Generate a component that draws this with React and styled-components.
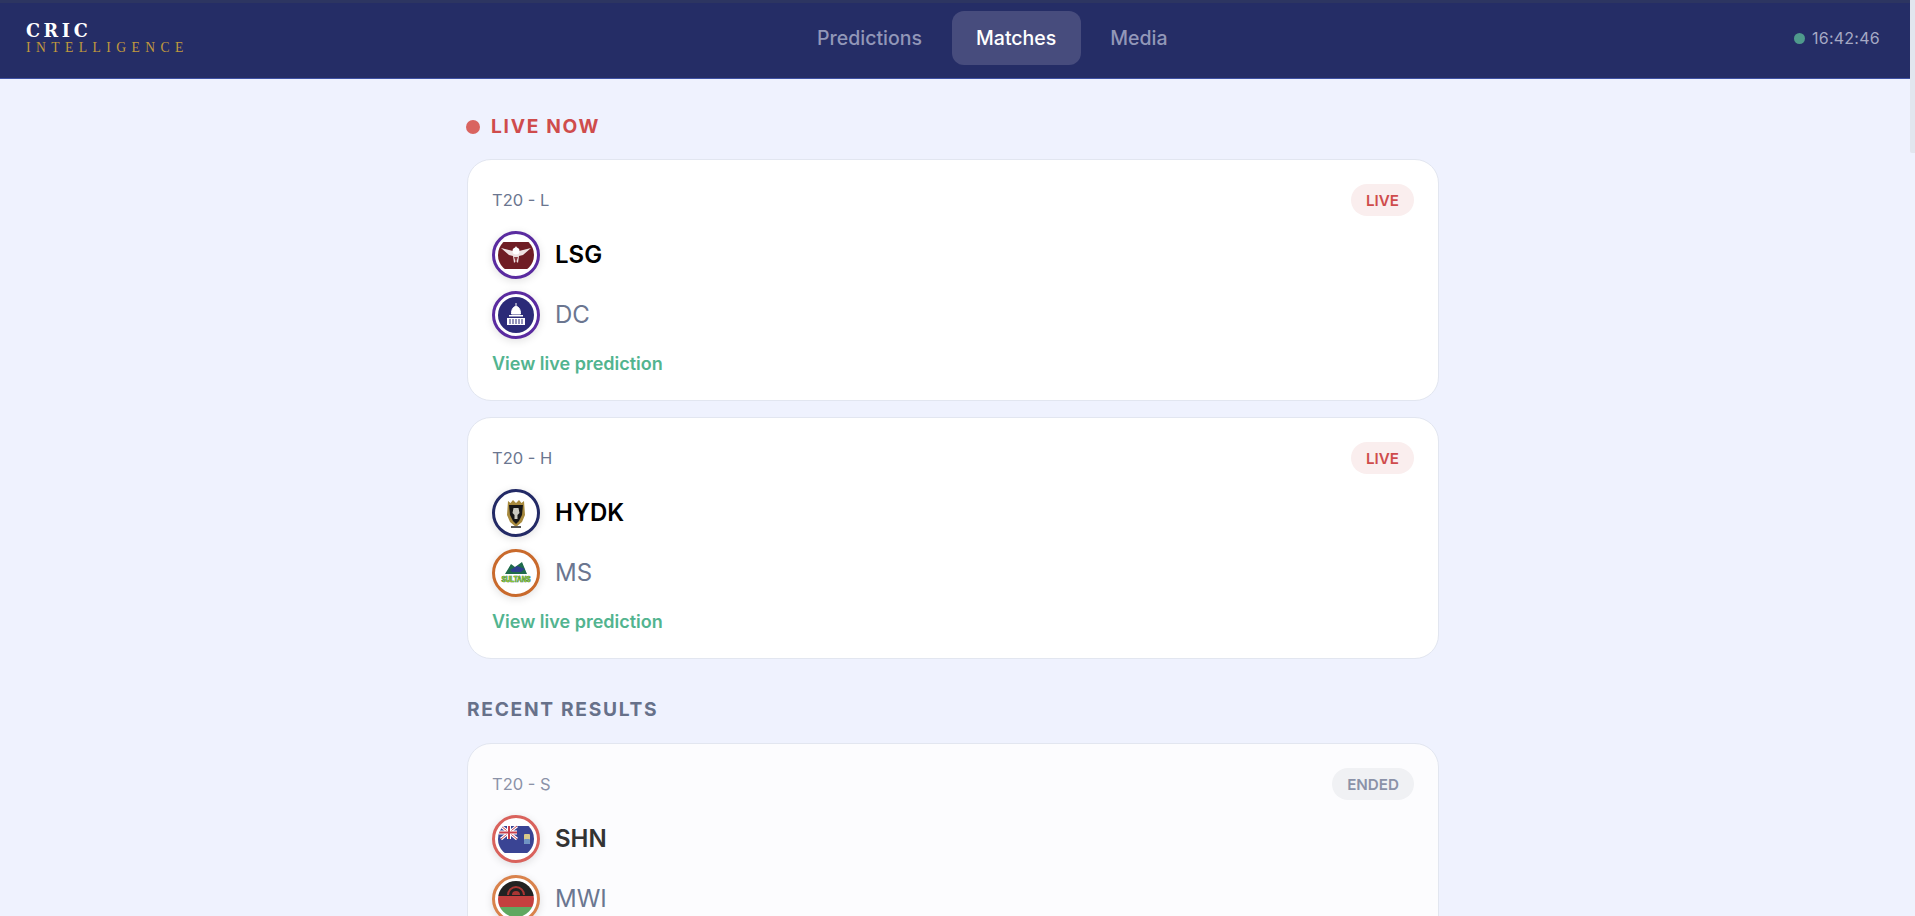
import React from "react";
import styled, { createGlobalStyle } from "styled-components";

const GlobalStyle = createGlobalStyle`
  html, body {
    margin: 0;
    padding: 0;
    height: 100%;
    overflow: hidden;
    background: #eff2fe;
    font-family: Inter, "Noto Sans", sans-serif;
  }
  * {
    box-sizing: border-box;
  }
`;

const Page = styled.div`
  height: 916px;
  overflow: hidden;
  display: flex;
`;

const Content = styled.div`
  flex: 1;
  min-width: 0;
`;

const ScrollTrack = styled.div`
  width: 5px;
`;

const ScrollThumb = styled.div`
  height: 153px;
  border-radius: 0 0 0 2px;
  background: #e2e6ee;
`;

const Header = styled.header`
  height: 79px;
  background: #252d66;
  box-shadow: inset 0 3px 0 #2d3561;
  border-bottom: 1px solid #3f51a3;
  display: flex;
  align-items: center;
  justify-content: space-between;
  padding: 0 30px 2px 26px;
`;

const Logo = styled.div`
  display: flex;
  flex-direction: column;
  margin: 0 2px 0 0;
`;

const LogoTop = styled.span`
  color: #ffffff;
  font-family: "DejaVu Serif", serif;
  font-size: 17.6px;
  font-weight: 700;
  line-height: 20px;
  letter-spacing: 3.6px;
`;

const LogoBottom = styled.span`
  color: #c29a3c;
  font-family: "Liberation Serif", serif;
  font-size: 13.6px;
  line-height: 14px;
  letter-spacing: 5.44px;
`;

const Nav = styled.nav`
  display: flex;
  gap: 5px;
`;

const NavItem = styled.a`
  padding: 0 24.5px;
  height: 54px;
  display: flex;
  align-items: center;
  border-radius: 12px;
  font-size: 19.5px;
  font-weight: 500;
  color: ${(p) => (p.$active ? "#ffffff" : "#9297b8")};
  background: ${(p) => (p.$active ? "#474c7d" : "transparent")};
`;

const Clock = styled.div`
  display: flex;
  align-items: center;
  gap: 7px;
  font-size: 16px;
  letter-spacing: 0.25px;
  color: #a5a9c4;
`;

const ClockDot = styled.span`
  width: 11px;
  height: 11px;
  border-radius: 50%;
  background: #4f9a8c;
`;

const Body = styled.div`
  padding-right: 4px;
`;

const Main = styled.main`
  width: 972px;
  margin: 0 auto;
`;

const SectionTitle = styled.h2`
  margin: 0;
  padding-top: ${(p) => (p.$first ? "36px" : "23px")};
  padding-bottom: ${(p) => (p.$first ? "21px" : "22px")};
  display: flex;
  align-items: center;
  gap: 11px;
  font-size: 19.2px;
  line-height: 23px;
  font-weight: 700;
  letter-spacing: 1.7px;
  color: ${(p) => p.$color};
`;

const PulseDot = styled.span`
  width: 14px;
  height: 14px;
  margin-left: -1px;
  border-radius: 50%;
  background: #d96460;
`;

const Card = styled.article`
  background: ${(p) => (p.$ended ? "#fcfcfe" : "#ffffff")};
  border: 1px solid #e2e6f0;
  border-radius: 24px;
  padding: 24px 24px 23px;
  margin-bottom: 16px;
`;

const CardHead = styled.div`
  display: flex;
  align-items: center;
  justify-content: space-between;
  height: 32px;
  margin-bottom: 15px;
`;

const League = styled.span`
  font-size: 16.5px;
  color: ${(p) => (p.$ended ? "#8b92a8" : "#6b7690")};
`;

const Badge = styled.span`
  height: 32px;
  padding: 0 15px;
  display: flex;
  align-items: center;
  border-radius: 16px;
  font-size: 15.2px;
  font-weight: 600;
  color: ${(p) => (p.$ended ? "#8b92a8" : "#cf4c4c")};
  background: ${(p) => (p.$ended ? "#f0f1f4" : "#faeeee")};
`;

const TeamRow = styled.div`
  display: flex;
  align-items: center;
  gap: 15px;
  margin-bottom: 12px;
`;

const Crest = styled.span`
  width: 48px;
  height: 48px;
  flex: none;
  border-radius: 50%;
  border: 3px solid ${(p) => p.$ring};
  background: #ffffff;
  box-shadow: 0 2px 8px rgba(0, 0, 0, 0.12);
  padding: 3px;
  display: flex;
  align-items: center;
  justify-content: center;
  overflow: hidden;
  svg {
    width: 100%;
    height: 100%;
    display: block;
    border-radius: 50%;
  }
`;

const TeamName = styled.span`
  font-size: 24px;
  line-height: 29px;
  padding-bottom: 1px;
  font-weight: ${(p) => (p.$winner ? 600 : 400)};
  color: ${(p) =>
    p.$winner ? (p.$ended ? "#333333" : "#000000") : "#6b7690"};
`;

const CardLink = styled.a`
  display: block;
  margin-top: 5px;
  font-size: 18px;
  font-weight: 600;
  line-height: 26px;
  color: #52b48f;
`;

const LsgCrest = () => (
  <svg viewBox="0 0 36 36">
    <rect y="5" width="36" height="27" fill="#6f1d24" />
    <path d="M3 11l12 3 3-5 3 5 12-3-8 7-4 1-1 7-2-2-2 2-1-7-4-1z" fill="#eee2e2" />
    <circle cx="18" cy="14" r="3.5" fill="#ffffff" />
    <path d="M16 20h4l-2 6z" fill="#8e3a40" />
  </svg>
);

const DcCrest = () => (
  <svg viewBox="0 0 36 36">
    <rect width="36" height="36" fill="#2b2a78" />
    <path d="M18 6v3M13.5 17c0-5 1.8-7.5 4.5-7.5s4.5 2.5 4.5 7.5z" fill="#ffffff" stroke="#ffffff" />
    <rect x="11" y="18" width="14" height="1.5" fill="#ffffff" />
    <path d="M9 21h18v7H9z" fill="#ffffff" />
    <path d="M12 22v5M15 22v5M18 22v5M21 22v5M24 22v5" stroke="#2b2a78" />
  </svg>
);

const HydkCrest = () => (
  <svg viewBox="0 0 36 36">
    <path d="M10 6l2.5 2 2.5-3 3 3 3-3 2.5 3 2.5-2 1 14-3 7-6 5-6-5-3-7z" fill="#a88a3e" />
    <path d="M11 10h14l-1 10-3 6-3 3-3-3-3-6z" fill="#171717" />
    <path d="M15.5 13h5l1 5-2 2v4h-3v-4l-2-2z" fill="#c9c9c0" />
    <rect x="13" y="31" width="10" height="2" fill="#555555" />
  </svg>
);

const MsCrest = () => (
  <svg viewBox="0 0 36 36">
    <path d="M7 19l6-10 4 3 7-5 5 12z" fill="#1f6b4b" />
    <path d="M12 15l7-4 8 3-4 3-9 0z" fill="#2f3f8f" />
    <text
      x="18"
      y="20.5"
      transform="scale(1 1.3)"
      textAnchor="middle"
      fontFamily="Liberation Sans, sans-serif"
      fontSize="6.4"
      fontWeight="700"
      fill="#86c82e"
      stroke="#164e35"
      strokeWidth="0.5"
      paintOrder="stroke"
    >
      SULTANS
    </text>
  </svg>
);

const ShnCrest = () => (
  <svg viewBox="0 0 36 36">
    <rect y="5" width="36" height="27" fill="#3a4494" />
    <path d="M3 5l16 13M19 5L3 18" stroke="#ffffff" strokeWidth="3" />
    <path d="M3 5l16 13M19 5L3 18" stroke="#c8404c" strokeWidth="1" />
    <path d="M11 5v13M1 11.5h18" stroke="#ffffff" strokeWidth="4" />
    <path d="M11 5v13M1 11.5h18" stroke="#c8404c" strokeWidth="2" />
    <rect x="26" y="13" width="6" height="10" rx="1" fill="#d9c98a" />
    <rect x="26" y="18" width="6" height="5" rx="1" fill="#6f93c4" />
  </svg>
);

const MwiCrest = () => (
  <svg viewBox="0 0 36 36">
    <rect width="36" height="15" fill="#222222" />
    <rect y="15" width="36" height="11" fill="#c4403f" />
    <rect y="26" width="36" height="10" fill="#5fa860" />
    <path d="M10 14a8 8 0 0 1 16 0" fill="none" stroke="#a83533" strokeWidth="2" />
    <path d="M14 14a4 4 0 0 1 8 0z" fill="#a83533" />
  </svg>
);

const matches = [
  {
    league: "T20 - L",
    teams: [
      { name: "LSG", ring: "#5a2ba0", crest: <LsgCrest />, winner: true },
      { name: "DC", ring: "#5a2ba0", crest: <DcCrest /> },
    ],
  },
  {
    league: "T20 - H",
    teams: [
      { name: "HYDK", ring: "#232a66", crest: <HydkCrest />, winner: true },
      { name: "MS", ring: "#c96a2c", crest: <MsCrest /> },
    ],
  },
];

const MatchCard = ({ league, teams, ended }) => (
  <Card $ended={ended}>
    <CardHead>
      <League $ended={ended}>{league}</League>
      <Badge $ended={ended}>{ended ? "ENDED" : "LIVE"}</Badge>
    </CardHead>
    {teams.map((team) => (
      <TeamRow key={team.name}>
        <Crest $ring={team.ring}>{team.crest}</Crest>
        <TeamName $winner={team.winner} $ended={ended}>
          {team.name}
        </TeamName>
      </TeamRow>
    ))}
    {!ended && <CardLink>View live prediction</CardLink>}
  </Card>
);

const App = () => (
  <>
    <GlobalStyle />
    <Page>
      <Content>
        <Header>
          <Logo>
            <LogoTop>CRIC</LogoTop>
            <LogoBottom>INTELLIGENCE</LogoBottom>
          </Logo>
          <Nav>
            <NavItem>Predictions</NavItem>
            <NavItem $active>Matches</NavItem>
            <NavItem>Media</NavItem>
          </Nav>
          <Clock>
            <ClockDot />
            16:42:46
          </Clock>
        </Header>
        <Body>
          <Main>
            <SectionTitle $first $color="#cf4c4c">
              <PulseDot />
              LIVE NOW
            </SectionTitle>
            {matches.map((match) => (
              <MatchCard key={match.league} {...match} />
            ))}
            <SectionTitle $color="#67718a">RECENT RESULTS</SectionTitle>
            <MatchCard
              ended
              league="T20 - S"
              teams={[
                { name: "SHN", ring: "#d9625c", crest: <ShnCrest />, winner: true },
                { name: "MWI", ring: "#d9824c", crest: <MwiCrest /> },
              ]}
            />
          </Main>
        </Body>
      </Content>
      <ScrollTrack>
        <ScrollThumb />
      </ScrollTrack>
    </Page>
  </>
);

export default App;
